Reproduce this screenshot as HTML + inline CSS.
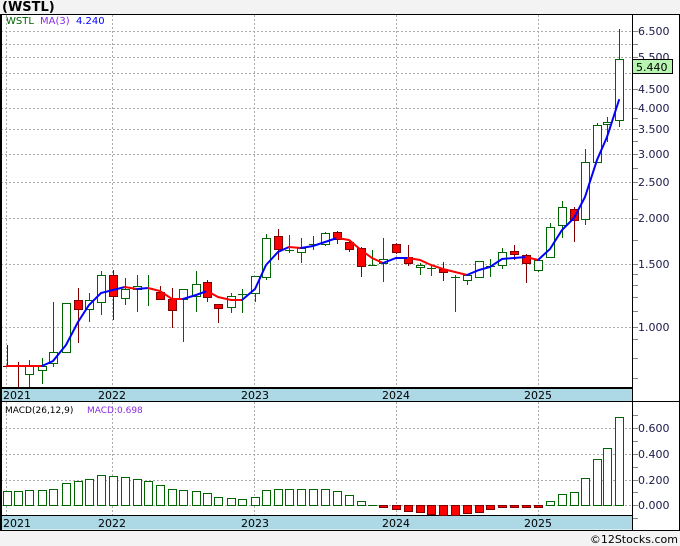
<!DOCTYPE html>
<html><head><meta charset="utf-8"><style>
html,body{margin:0;padding:0;background:#f3f3f3;width:680px;height:546px;overflow:hidden}
svg{display:block}
text{font-family:"DejaVu Sans","Liberation Sans",sans-serif}
</style></head><body>
<svg width="680" height="546" xmlns="http://www.w3.org/2000/svg">
<rect x="0" y="0" width="680" height="546" fill="#f3f3f3"/>
<text x="2" y="11" font-size="13" font-weight="bold" fill="#000">(WSTL)</text>
<rect x="0" y="14" width="680" height="517" fill="#fff"/>
<g stroke="#aaa" stroke-dasharray="2,2" stroke-width="1">
<line x1="1" x2="632" y1="31.5" y2="31.5"/><line x1="1" x2="632" y1="44.5" y2="44.5"/><line x1="1" x2="632" y1="57.5" y2="57.5"/><line x1="1" x2="632" y1="73.5" y2="73.5"/><line x1="1" x2="632" y1="89.5" y2="89.5"/><line x1="1" x2="632" y1="108.5" y2="108.5"/><line x1="1" x2="632" y1="129.5" y2="129.5"/><line x1="1" x2="632" y1="154.5" y2="154.5"/><line x1="1" x2="632" y1="182.5" y2="182.5"/><line x1="1" x2="632" y1="218.5" y2="218.5"/><line x1="1" x2="632" y1="264.5" y2="264.5"/><line x1="1" x2="632" y1="327.5" y2="327.5"/>
<line x1="6.5" x2="6.5" y1="15" y2="388"/><line x1="112.5" x2="112.5" y1="15" y2="388"/><line x1="254.5" x2="254.5" y1="15" y2="388"/><line x1="396.5" x2="396.5" y1="15" y2="388"/><line x1="538.5" x2="538.5" y1="15" y2="388"/>
<line x1="1" x2="632" y1="428.5" y2="428.5"/><line x1="1" x2="632" y1="454.5" y2="454.5"/><line x1="1" x2="632" y1="480.5" y2="480.5"/><line x1="1" x2="632" y1="505.5" y2="505.5"/>
<line x1="6.5" x2="6.5" y1="402" y2="515"/><line x1="112.5" x2="112.5" y1="402" y2="515"/><line x1="254.5" x2="254.5" y1="402" y2="515"/><line x1="396.5" x2="396.5" y1="402" y2="515"/><line x1="538.5" x2="538.5" y1="402" y2="515"/>
</g>
<text x="6" y="24" font-size="10" fill="#006400">WSTL</text>
<text x="40" y="24" font-size="10" fill="#8a2be2">MA(3)</text>
<text x="76" y="24" font-size="10" fill="#0000ff">4.240</text>
<g stroke-width="1" shape-rendering="crispEdges">
<g stroke="#006400" fill="#fff">
<line x1="29.5" x2="29.5" y1="360" y2="387"/><rect x="25.5" y="365.5" width="8" height="9"/>
<line x1="42.5" x2="42.5" y1="358" y2="384"/><rect x="38.5" y="366.5" width="8" height="4"/>
<line x1="53.5" x2="53.5" y1="302" y2="367"/><rect x="49.5" y="352.5" width="8" height="11"/>
<line x1="66.5" x2="66.5" y1="303" y2="352"/><rect x="62.5" y="303.5" width="8" height="49"/>
<line x1="89.5" x2="89.5" y1="293" y2="322"/><rect x="85.5" y="300.5" width="8" height="9"/>
<line x1="101.5" x2="101.5" y1="271" y2="315"/><rect x="97.5" y="275.5" width="8" height="27"/>
<line x1="125.5" x2="125.5" y1="278" y2="305"/><rect x="121.5" y="289.5" width="8" height="9"/>
<line x1="137.5" x2="137.5" y1="275" y2="312"/><rect x="133.5" y="286.5" width="8" height="3"/>
<line x1="148.5" x2="148.5" y1="275" y2="306"/><line x1="144" x2="153" y1="288.5" y2="288.5"/>
<line x1="183.5" x2="183.5" y1="289" y2="342"/><rect x="179.5" y="289.5" width="8" height="10"/>
<line x1="196.5" x2="196.5" y1="271" y2="312"/><rect x="192.5" y="284.5" width="8" height="12"/>
<line x1="231.5" x2="231.5" y1="293" y2="313"/><rect x="227.5" y="296.5" width="8" height="11"/>
<line x1="242.5" x2="242.5" y1="289" y2="313"/><line x1="238" x2="247" y1="294.5" y2="294.5"/>
<line x1="255.5" x2="255.5" y1="276" y2="302"/><rect x="251.5" y="276.5" width="8" height="17"/>
<line x1="266.5" x2="266.5" y1="234" y2="280"/><rect x="262.5" y="238.5" width="8" height="39"/>
<line x1="289.5" x2="289.5" y1="235" y2="253"/><line x1="285" x2="294" y1="250.5" y2="250.5"/>
<line x1="301.5" x2="301.5" y1="238" y2="263"/><rect x="297.5" y="248.5" width="8" height="4"/>
<line x1="313.5" x2="313.5" y1="236" y2="250"/><line x1="309" x2="318" y1="244.5" y2="244.5"/>
<line x1="325.5" x2="325.5" y1="232" y2="246"/><rect x="321.5" y="233.5" width="8" height="11"/>
<line x1="372.5" x2="372.5" y1="250" y2="266"/><line x1="368" x2="377" y1="265.5" y2="265.5"/>
<line x1="383.5" x2="383.5" y1="238" y2="282"/><rect x="379.5" y="259.5" width="8" height="4"/>
<line x1="420.5" x2="420.5" y1="263" y2="275"/><rect x="416.5" y="265.5" width="8" height="2"/>
<line x1="431.5" x2="431.5" y1="265" y2="276"/><line x1="427" x2="436" y1="268.5" y2="268.5"/>
<line x1="455.5" x2="455.5" y1="275" y2="312"/><line x1="451" x2="460" y1="277.5" y2="277.5"/>
<line x1="467.5" x2="467.5" y1="275" y2="285"/><rect x="463.5" y="275.5" width="8" height="5"/>
<line x1="479.5" x2="479.5" y1="261" y2="278"/><rect x="475.5" y="261.5" width="8" height="16"/>
<line x1="490.5" x2="490.5" y1="259" y2="277"/><line x1="486" x2="495" y1="266.5" y2="266.5"/>
<line x1="502.5" x2="502.5" y1="248" y2="269"/><rect x="498.5" y="252.5" width="8" height="13"/>
<line x1="538.5" x2="538.5" y1="260" y2="272"/><rect x="534.5" y="260.5" width="8" height="10"/>
<line x1="550.5" x2="550.5" y1="223" y2="258"/><rect x="546.5" y="227.5" width="8" height="30"/>
<line x1="562.5" x2="562.5" y1="201" y2="238"/><rect x="558.5" y="207.5" width="8" height="18"/>
<line x1="585.5" x2="585.5" y1="149" y2="225"/><rect x="581.5" y="162.5" width="8" height="57"/>
<line x1="597.5" x2="597.5" y1="123" y2="162"/><rect x="593.5" y="125.5" width="8" height="37"/>
<line x1="607.5" x2="607.5" y1="117" y2="142"/><rect x="603.5" y="122.5" width="8" height="2"/>
<line x1="619.5" x2="619.5" y1="29" y2="127"/><rect x="615.5" y="59.5" width="8" height="61"/>
</g>
<g stroke="#800000" fill="#f00">
<line x1="7.5" x2="7.5" y1="345" y2="366"/><line x1="3" x2="12" y1="366.5" y2="366.5"/>
<line x1="18.5" x2="18.5" y1="362" y2="387"/><line x1="14" x2="23" y1="366.5" y2="366.5"/>
<line x1="78.5" x2="78.5" y1="288" y2="343"/><rect x="74.5" y="300.5" width="8" height="9"/>
<line x1="113.5" x2="113.5" y1="270" y2="320"/><rect x="109.5" y="275.5" width="8" height="21"/>
<line x1="160.5" x2="160.5" y1="286" y2="300"/><rect x="156.5" y="292.5" width="8" height="7"/>
<line x1="172.5" x2="172.5" y1="288" y2="328"/><rect x="168.5" y="299.5" width="8" height="11"/>
<line x1="207.5" x2="207.5" y1="280" y2="302"/><rect x="203.5" y="282.5" width="8" height="15"/>
<line x1="218.5" x2="218.5" y1="304" y2="323"/><rect x="214.5" y="304.5" width="8" height="4"/>
<line x1="278.5" x2="278.5" y1="229" y2="260"/><rect x="274.5" y="236.5" width="8" height="13"/>
<line x1="337.5" x2="337.5" y1="231" y2="244"/><rect x="333.5" y="232.5" width="8" height="7"/>
<line x1="349.5" x2="349.5" y1="241" y2="252"/><rect x="345.5" y="242.5" width="8" height="7"/>
<line x1="361.5" x2="361.5" y1="247" y2="277"/><rect x="357.5" y="248.5" width="8" height="18"/>
<line x1="396.5" x2="396.5" y1="243" y2="254"/><rect x="392.5" y="244.5" width="8" height="8"/>
<line x1="408.5" x2="408.5" y1="245" y2="266"/><rect x="404.5" y="257.5" width="8" height="6"/>
<line x1="443.5" x2="443.5" y1="262" y2="281"/><rect x="439.5" y="269.5" width="8" height="3"/>
<line x1="514.5" x2="514.5" y1="245" y2="260"/><rect x="510.5" y="251.5" width="8" height="3"/>
<line x1="526.5" x2="526.5" y1="254" y2="283"/><rect x="522.5" y="255.5" width="8" height="8"/>
<line x1="574.5" x2="574.5" y1="207" y2="242"/><rect x="570.5" y="209.5" width="8" height="11"/>
</g>
</g>
<g stroke-width="2" stroke-linecap="round" fill="none">
<polyline stroke="#f00" points="7,366 18,366 29,366 42,366"/>
<polyline stroke="#00f" points="42,366 53,361 66,345 78,322 89,305 101,293 113,290 125,287"/>
<polyline stroke="#f00" points="125,287 137,289"/>
<polyline stroke="#00f" points="137,289 148,288"/>
<polyline stroke="#f00" points="148,288 160,291 172,299 183,299"/>
<polyline stroke="#00f" points="183,299 196,295 207,291"/>
<polyline stroke="#f00" points="207,291 218,297 231,300 242,300"/>
<polyline stroke="#00f" points="242,300 255,289 266,265 278,252 289,247"/>
<polyline stroke="#f00" points="289,247 301,248"/>
<polyline stroke="#00f" points="301,248 313,246 325,242 337,238"/>
<polyline stroke="#f00" points="337,238 349,240 361,250 372,258 383,263"/>
<polyline stroke="#00f" points="383,263 396,258 408,258"/>
<polyline stroke="#f00" points="408,258 420,260 431,265 443,269 455,272 467,275"/>
<polyline stroke="#00f" points="467,275 479,270 490,267 502,259 514,258 526,257"/>
<polyline stroke="#f00" points="526,257 538,260"/>
<polyline stroke="#00f" points="538,260 550,249 562,230 574,218 585,197 597,160 607,137 619,100"/>
</g>
<!-- date bands -->
<rect x="1" y="388.5" width="631" height="13" fill="#add8e6"/>
<line x1="0" x2="632" y1="388" y2="388" stroke="#000" stroke-width="2"/>
<line x1="0" x2="680" y1="401.5" y2="401.5" stroke="#000"/>
<rect x="1" y="515.5" width="631" height="14" fill="#add8e6"/>
<line x1="0" x2="632" y1="515.5" y2="515.5" stroke="#000"/>
<line x1="0" x2="680" y1="530.5" y2="530.5" stroke="#000"/>
<g font-size="11" fill="#000">
<text x="3" y="399">2021</text><text x="98" y="399">2022</text><text x="241" y="399">2023</text><text x="382" y="399">2024</text><text x="524" y="399">2025</text>
<text x="3" y="527">2021</text><text x="98" y="527">2022</text><text x="241" y="527">2023</text><text x="382" y="527">2024</text><text x="524" y="527">2025</text>
</g>
<!-- frame -->
<line x1="0" x2="680" y1="14.5" y2="14.5" stroke="#000"/>
<line x1="1" x2="1" y1="14" y2="531" stroke="#000" stroke-width="2"/>
<line x1="632.5" x2="632.5" y1="14" y2="531" stroke="#000"/>
<line x1="679.5" x2="679.5" y1="14" y2="531" stroke="#000"/>
<g stroke="#888">
<line x1="633" x2="638" y1="31.5" y2="31.5"/><line x1="633" x2="638" y1="44.5" y2="44.5"/><line x1="633" x2="638" y1="57.5" y2="57.5"/><line x1="633" x2="638" y1="73.5" y2="73.5"/><line x1="633" x2="638" y1="89.5" y2="89.5"/><line x1="633" x2="638" y1="108.5" y2="108.5"/><line x1="633" x2="638" y1="118.5" y2="118.5"/><line x1="633" x2="638" y1="129.5" y2="129.5"/><line x1="633" x2="638" y1="141.5" y2="141.5"/><line x1="633" x2="638" y1="154.5" y2="154.5"/><line x1="633" x2="638" y1="168.5" y2="168.5"/><line x1="633" x2="638" y1="182.5" y2="182.5"/><line x1="633" x2="638" y1="199.5" y2="199.5"/><line x1="633" x2="638" y1="218.5" y2="218.5"/><line x1="633" x2="638" y1="240.5" y2="240.5"/><line x1="633" x2="638" y1="264.5" y2="264.5"/><line x1="633" x2="638" y1="274.5" y2="274.5"/><line x1="633" x2="638" y1="285.5" y2="285.5"/><line x1="633" x2="638" y1="297.5" y2="297.5"/><line x1="633" x2="638" y1="311.5" y2="311.5"/><line x1="633" x2="638" y1="327.5" y2="327.5"/><line x1="633" x2="638" y1="339.5" y2="339.5"/><line x1="633" x2="638" y1="358.5" y2="358.5"/><line x1="633" x2="638" y1="378.5" y2="378.5"/>
<line x1="633" x2="638" y1="415.5" y2="415.5"/><line x1="633" x2="638" y1="428.5" y2="428.5"/><line x1="633" x2="638" y1="441.5" y2="441.5"/><line x1="633" x2="638" y1="454.5" y2="454.5"/><line x1="633" x2="638" y1="467.5" y2="467.5"/><line x1="633" x2="638" y1="480.5" y2="480.5"/><line x1="633" x2="638" y1="492.5" y2="492.5"/><line x1="633" x2="638" y1="505.5" y2="505.5"/><line x1="633" x2="638" y1="518.5" y2="518.5"/>
</g>
<g font-size="11" fill="#1a1a4a">
<text x="638" y="35">6.500</text><text x="638" y="61">5.500</text><text x="638" y="93">4.500</text><text x="638" y="112">4.000</text><text x="638" y="133">3.500</text><text x="638" y="158">3.000</text><text x="638" y="186">2.500</text><text x="638" y="222">2.000</text><text x="638" y="268">1.500</text><text x="638" y="331">1.000</text>
<text x="638" y="432">0.600</text><text x="638" y="458">0.400</text><text x="638" y="484">0.200</text><text x="638" y="509">0.000</text>
</g>
<rect x="632.5" y="59.5" width="40" height="14" fill="#b8f5b0" stroke="#000"/>
<text x="636" y="71" font-size="11" fill="#000">5.440</text>
<!-- MACD -->
<text x="5" y="413" font-size="9" fill="#000">MACD(26,12,9)</text>
<text x="87" y="413" font-size="9" fill="#8a2be2">MACD:0.698</text>
<g stroke="#006400" fill="#fff" shape-rendering="crispEdges">
<rect x="3.5" y="491.5" width="8" height="14"/><rect x="14.5" y="491.5" width="8" height="14"/><rect x="25.5" y="490.5" width="8" height="15"/><rect x="38.5" y="490.5" width="8" height="15"/><rect x="49.5" y="489.5" width="8" height="16"/><rect x="62.5" y="483.5" width="8" height="22"/><rect x="74.5" y="481.5" width="8" height="24"/><rect x="85.5" y="479.5" width="8" height="26"/><rect x="97.5" y="475.5" width="8" height="30"/><rect x="109.5" y="476.5" width="8" height="29"/><rect x="121.5" y="477.5" width="8" height="28"/><rect x="133.5" y="479.5" width="8" height="26"/><rect x="144.5" y="481.5" width="8" height="24"/><rect x="156.5" y="485.5" width="8" height="20"/><rect x="168.5" y="489.5" width="8" height="16"/><rect x="179.5" y="490.5" width="8" height="15"/><rect x="192.5" y="491.5" width="8" height="14"/><rect x="203.5" y="493.5" width="8" height="12"/><rect x="214.5" y="497.5" width="8" height="8"/><rect x="227.5" y="498.5" width="8" height="7"/><rect x="238.5" y="499.5" width="8" height="6"/><rect x="251.5" y="497.5" width="8" height="8"/><rect x="262.5" y="490.5" width="8" height="15"/><rect x="274.5" y="489.5" width="8" height="16"/><rect x="285.5" y="489.5" width="8" height="16"/><rect x="297.5" y="489.5" width="8" height="16"/><rect x="309.5" y="489.5" width="8" height="16"/><rect x="321.5" y="489.5" width="8" height="16"/><rect x="333.5" y="491.5" width="8" height="14"/><rect x="345.5" y="495.5" width="8" height="10"/><rect x="357.5" y="501.5" width="8" height="4"/><line x1="368" x2="377" y1="505.5" y2="505.5"/>
<rect x="546.5" y="501.5" width="8" height="4"/><rect x="558.5" y="494.5" width="8" height="11"/><rect x="570.5" y="492.5" width="8" height="13"/><rect x="581.5" y="478.5" width="8" height="27"/><rect x="593.5" y="459.5" width="8" height="46"/><rect x="603.5" y="448.5" width="8" height="57"/><rect x="615.5" y="417.5" width="8" height="88"/>
</g>
<g stroke="#800000" fill="#f00" shape-rendering="crispEdges">
<rect x="379.5" y="505.5" width="8" height="2"/><rect x="392.5" y="505.5" width="8" height="4"/><rect x="404.5" y="505.5" width="8" height="6"/><rect x="416.5" y="505.5" width="8" height="7"/><rect x="427.5" y="505.5" width="8" height="9"/><rect x="439.5" y="505.5" width="8" height="10"/><rect x="451.5" y="505.5" width="8" height="10"/><rect x="463.5" y="505.5" width="8" height="8"/><rect x="475.5" y="505.5" width="8" height="7"/><rect x="486.5" y="505.5" width="8" height="4"/><rect x="498.5" y="505.5" width="8" height="2"/><rect x="510.5" y="505.5" width="8" height="2"/><rect x="522.5" y="505.5" width="8" height="2"/><rect x="534.5" y="505.5" width="8" height="2"/>
</g>
<text x="678" y="543" font-size="11" fill="#000" text-anchor="end">©12Stocks.com</text>
</svg>
</body></html>
